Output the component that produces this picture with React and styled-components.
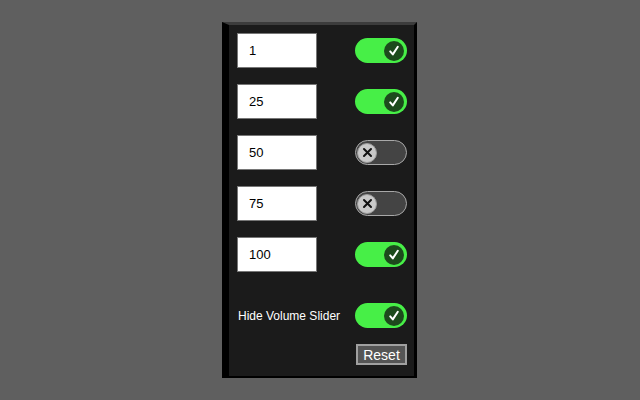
import React, { useState } from 'react';
import styled, { createGlobalStyle } from 'styled-components';

const GlobalStyle = createGlobalStyle`
  html, body {
    margin: 0;
    padding: 0;
    background: #5f5f5f;
    height: 100%;
  }
  #root {
    height: 100%;
  }
`;

const Page = styled.div`
  height: 400px;
  display: flex;
  justify-content: center;
  padding: 22px 1px 0 0;
  box-sizing: border-box;
  font-family: "Liberation Sans", Arial, sans-serif;
`;

const Panel = styled.div`
  width: 195px;
  height: 356px;
  box-sizing: border-box;
  background: #1b1b1b;
  border-top: 3px solid #3c3c3c;
  border-left: 7px solid #000;
  border-right: 3px solid #000;
  border-bottom: 2px solid #000;
  padding: 8px 7px 0 8px;
  display: flex;
  flex-direction: column;
`;

const Row = styled.div`
  display: flex;
  align-items: center;
  justify-content: space-between;
  height: 35px;
  margin-bottom: ${p => p.$gap ?? 16}px;
`;

const NumberInput = styled.input`
  width: 80px;
  height: 35px;
  box-sizing: border-box;
  border: 1px solid #767676;
  background: #fff;
  padding: 0 0 0 11px;
  font-family: "Liberation Sans", Arial, sans-serif;
  font-size: 13px;
  color: #000;
  outline: none;
`;

const Label = styled.span`
  color: #fff;
  font-size: 12px;
  margin-left: 1px;
`;

const Track = styled.button`
  position: relative;
  width: 52px;
  height: 25px;
  box-sizing: border-box;
  border-radius: 13px;
  padding: 0;
  cursor: pointer;
  border: ${p => (p.$on ? 'none' : '1.5px solid #a8a8a8')};
  background: ${p => (p.$on ? '#47ef47' : '#444444')};
`;

const Knob = styled.span`
  position: absolute;
  top: 50%;
  transform: translateY(-50%);
  width: 20px;
  height: 20px;
  border-radius: 50%;
  display: flex;
  align-items: center;
  justify-content: center;
  box-sizing: border-box;
  ${p =>
    p.$on
      ? 'right: 3px; background: #1d4a1d;'
      : 'left: 1px; background: #c9c9c9; border: 1px solid #9a9a9a;'}
`;

const ResetRow = styled.div`
  display: flex;
  justify-content: flex-end;
  margin-top: 11px;
`;

const ResetButton = styled.button`
  width: 51px;
  height: 21px;
  box-sizing: border-box;
  background: #555;
  color: #fff;
  border: 2px solid #a0a0a0;
  font-family: "Liberation Sans", Arial, sans-serif;
  font-size: 14px;
  padding: 0;
  cursor: pointer;
`;

const Check = () => (
  <svg width="12" height="12" viewBox="0 0 12 12">
    <path d="M2.2 6.4 L4.8 9.4 L9.8 1.8" fill="none" stroke="#fff" strokeWidth="2" strokeLinecap="round" strokeLinejoin="round" />
  </svg>
);

const Cross = () => (
  <svg width="11" height="11" viewBox="0 0 11 11">
    <path d="M2 2 L9 9 M9 2 L2 9" fill="none" stroke="#111" strokeWidth="2" strokeLinecap="round" />
  </svg>
);

function Toggle({ on, onChange }) {
  return (
    <Track $on={on} onClick={() => onChange(!on)}>
      <Knob $on={on}>{on ? <Check /> : <Cross />}</Knob>
    </Track>
  );
}

const initialRows = [
  { value: '1', on: true },
  { value: '25', on: true },
  { value: '50', on: false },
  { value: '75', on: false },
  { value: '100', on: true },
];

export default function App() {
  const [rows, setRows] = useState(initialRows);
  const [hideSlider, setHideSlider] = useState(true);

  const update = (i, patch) =>
    setRows(rows.map((r, j) => (j === i ? { ...r, ...patch } : r)));

  return (
    <Page>
      <GlobalStyle />
      <Panel>
        {rows.map((r, i) => (
          <Row key={i} $gap={i === rows.length - 1 ? 26 : 16}>
            <NumberInput
              type="text"
              value={r.value}
              onChange={e => update(i, { value: e.target.value })}
            />
            <Toggle on={r.on} onChange={v => update(i, { on: v })} />
          </Row>
        ))}
        <Row $gap={0}>
          <Label>Hide Volume Slider</Label>
          <Toggle on={hideSlider} onChange={setHideSlider} />
        </Row>
        <ResetRow>
          <ResetButton onClick={() => { setRows(initialRows); setHideSlider(true); }}>
            Reset
          </ResetButton>
        </ResetRow>
      </Panel>
    </Page>
  );
}
